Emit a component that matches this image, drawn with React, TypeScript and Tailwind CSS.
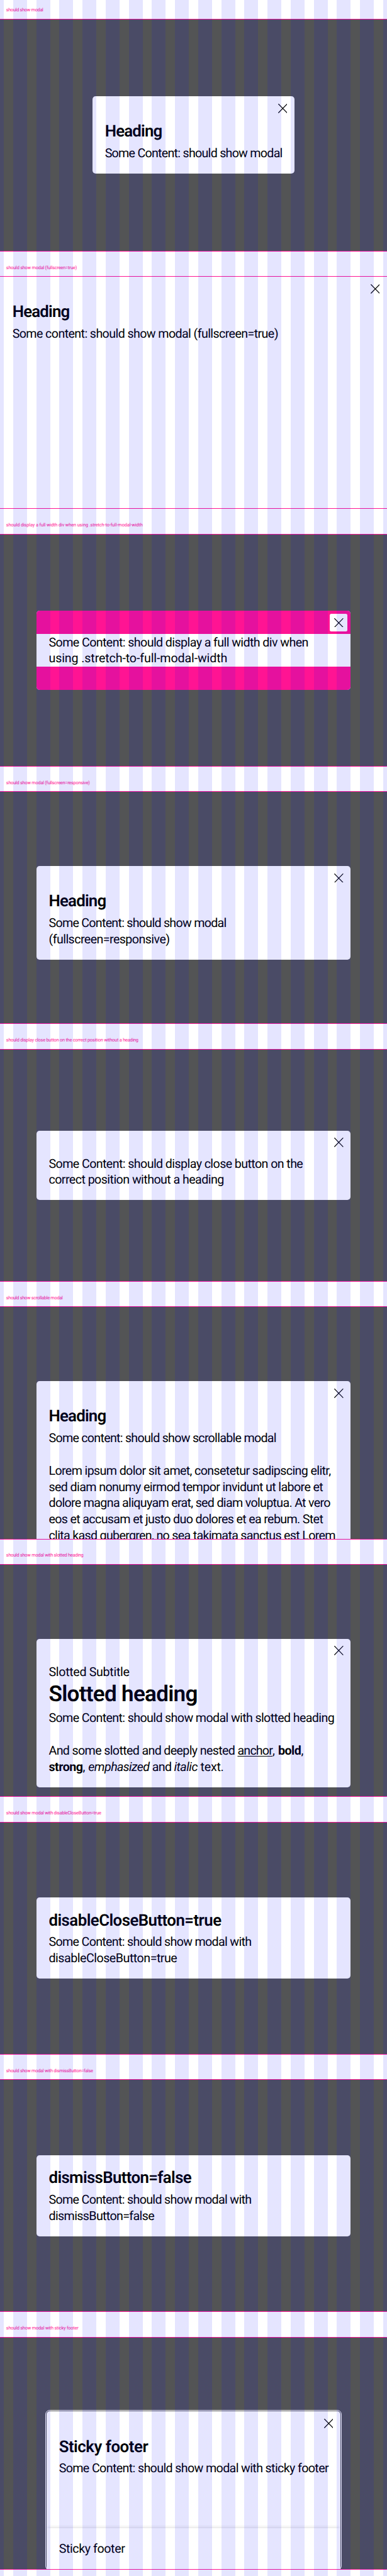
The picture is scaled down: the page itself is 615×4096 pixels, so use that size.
import type { ReactNode } from "react";
import clsx from "clsx";

function CloseButton() {
  return (
    <button
      type="button"
      aria-label="Close"
      className="absolute top-[4.92px] right-[4.92px] z-10 flex size-[28.29px] items-center justify-center rounded-[2.5px] bg-white"
    >
      <svg viewBox="0 0 24 24" className="size-[14.76px]" fill="none" stroke="#010205" strokeWidth="1.9">
        <path d="M0.6 0.3 23.4 23.7M23.4 0.3 0.6 23.7" />
      </svg>
    </button>
  );
}

function Line({ children, className }: { children?: ReactNode; className?: string }) {
  return <span className={clsx("block h-[25.83px] whitespace-pre", className)}>{children}</span>;
}

function Body({ children }: { children: ReactNode }) {
  return <div className="-mb-[0.6px] pt-[0.6px] text-[19.68px] leading-[25.83px]">{children}</div>;
}

function Heading({ children, className }: { children: ReactNode; className: string }) {
  return (
    <h2
      className={clsx(
        "mb-[4.12px] pt-[0.8px] text-[25.83px] leading-[33.21px] font-semibold whitespace-nowrap",
        className,
      )}
    >
      {children}
    </h2>
  );
}

function Modal({
  children,
  className = "w-[499.38px]",
  closable = true,
}: {
  children: ReactNode;
  className?: string;
  closable?: boolean;
}) {
  return (
    <div
      className={clsx(
        "relative shrink-0 rounded-[4.92px] bg-white px-[19.68px] pb-[19.68px]",
        closable ? "pt-[39.36px]" : "pt-[19.68px]",
        className,
      )}
    >
      {closable && <CloseButton />}
      {children}
    </div>
  );
}

function Case({
  title,
  tracking,
  first,
  align = "center",
  children,
}: {
  title: string;
  tracking: string;
  first?: boolean;
  align?: "center" | "top" | "fill";
  children: ReactNode;
}) {
  return (
    <section>
      <header
        className={clsx(
          "flex flex-col justify-end pb-[8.6px] pl-[9.84px] text-[7.38px] leading-[11px] text-[#ff1493]",
          first ? "h-[29.52px]" : "h-[39.36px]",
        )}
      >
        <p className={clsx("whitespace-nowrap", tracking)}>{title}</p>
      </header>
      <div
        className={clsx(
          "flex h-[370.23px] justify-center overflow-hidden border-y border-[#ff1493]",
          align === "center" && "items-center bg-[#535455]",
          align === "top" && "items-start bg-[#535455] pt-[117.7px]",
          align === "fill" && "items-stretch bg-white",
        )}
      >
        {children}
      </div>
    </section>
  );
}

export default function App() {
  return (
    <main className="relative h-[4096px] w-[615px] overflow-hidden bg-white font-['Roboto',sans-serif] text-[#010205] [text-rendering:geometricPrecision]">
      <Case first title="should show modal" tracking="tracking-[-0.042em]">
        <Modal className="w-[321.03px]">
          <Heading className="tracking-[-0.031em]">Heading</Heading>
          <Body>
            <Line className="tracking-[-0.0375em]">Some Content: should show modal</Line>
          </Body>
        </Modal>
      </Case>

      <Case title="should show modal (fullscreen=true)" tracking="tracking-[-0.0305em]" align="fill">
        <Modal className="w-full rounded-none">
          <Heading className="tracking-[-0.031em]">Heading</Heading>
          <Body>
            <Line className="tracking-[-0.0308em]">Some content: should show modal (fullscreen=true)</Line>
          </Body>
        </Modal>
      </Case>

      <Case
        title="should display a full width div when using .stretch-to-full-modal-width"
        tracking="tracking-[-0.0165em]"
      >
        <div className="relative w-[499.38px] overflow-hidden rounded-[4.92px] bg-white">
          <CloseButton />
          <div className="h-[36.9px] bg-[#ff1493]" />
          <div className="px-[19.68px]">
            <Body>
              <Line className="tracking-[-0.0305em]">Some Content: should display a full width div when</Line>
              <Line className="tracking-[-0.0068em]">using .stretch-to-full-modal-width</Line>
            </Body>
          </div>
          <div className="h-[36.9px] bg-[#ff1493]" />
        </div>
      </Case>

      <Case title="should show modal (fullscreen=responsive)" tracking="tracking-[-0.033em]" align="top">
        <Modal>
          <Heading className="tracking-[-0.031em]">Heading</Heading>
          <Body>
            <Line className="tracking-[-0.0375em]">Some Content: should show modal</Line>
            <Line className="tracking-[-0.0292em]">(fullscreen=responsive)</Line>
          </Body>
        </Modal>
      </Case>

      <Case
        title="should display close button on the correct position without a heading"
        tracking="tracking-[-0.0302em]"
      >
        <Modal>
          <Body>
            <Line className="tracking-[-0.0305em]">Some Content: should display close button on the</Line>
            <Line className="tracking-[-0.029em]">correct position without a heading</Line>
          </Body>
        </Modal>
      </Case>

      <Case title="should show scrollable modal" tracking="tracking-[-0.038em]" align="top">
        <Modal>
          <Heading className="tracking-[-0.031em]">Heading</Heading>
          <Body>
            <Line className="tracking-[-0.037em]">Some content: should show scrollable modal</Line>
            <Line />
            <Line className="tracking-[-0.0325em]">Lorem ipsum dolor sit amet, consetetur sadipscing elitr,</Line>
            <Line className="tracking-[-0.0317em]">sed diam nonumy eirmod tempor invidunt ut labore et</Line>
            <Line className="tracking-[-0.035em]">dolore magna aliquyam erat, sed diam voluptua. At vero</Line>
            <Line className="tracking-[-0.0334em]">eos et accusam et justo duo dolores et ea rebum. Stet</Line>
            <Line className="tracking-[-0.0351em]">clita kasd gubergren, no sea takimata sanctus est Lorem</Line>
          </Body>
        </Modal>
      </Case>

      <Case title="should show modal with slotted heading" tracking="tracking-[-0.034em]" align="top">
        <Modal>
          <Body>
            <Line className="tracking-[-0.017em]">Slotted Subtitle</Line>
          </Body>
          <h2 className="mb-[3.9px] pt-[1px] text-[35.06px] leading-[43.05px] font-semibold tracking-[-0.02em] whitespace-nowrap">
            Slotted heading
          </h2>
          <Body>
            <Line className="tracking-[-0.0323em]">Some Content: should show modal with slotted heading</Line>
            <Line />
            <Line>
              <span className="tracking-[-0.0332em]">And some slotted and deeply nested </span>
              <a className="tracking-[-0.0419em] underline decoration-[1.23px] underline-offset-[2.4px]">anchor</a>
              {", "}
              <b className="font-bold tracking-[-0.0238em]">bold</b>,
            </Line>
            <Line>
              <strong className="font-bold tracking-[-0.0249em]">strong</strong>
              {", "}
              <em className="tracking-[-0.0305em] italic">emphasized</em>
              <span className="tracking-[-0.035em]"> and </span>
              <i className="tracking-[-0.0257em] italic">italic</i>
              <span className="tracking-[-0.0139em]"> text.</span>
            </Line>
          </Body>
        </Modal>
      </Case>

      <Case title="should show modal with disableCloseButton=true" tracking="tracking-[-0.0335em]">
        <Modal closable={false}>
          <Heading className="tracking-[-0.0215em]">disableCloseButton=true</Heading>
          <Body>
            <Line className="tracking-[-0.0348em]">Some Content: should show modal with</Line>
            <Line className="tracking-[-0.0257em]">disableCloseButton=true</Line>
          </Body>
        </Modal>
      </Case>

      <Case title="should show modal with dismissButton=false" tracking="tracking-[-0.0355em]">
        <Modal closable={false}>
          <Heading className="tracking-[-0.0248em]">dismissButton=false</Heading>
          <Body>
            <Line className="tracking-[-0.0348em]">Some Content: should show modal with</Line>
            <Line className="tracking-[-0.0332em]">dismissButton=false</Line>
          </Body>
        </Modal>
      </Case>

      <Case title="should show modal with sticky footer" tracking="tracking-[-0.0285em]" align="top">
        <div className="relative w-[467.1px] shrink-0 rounded-[5px] bg-white outline outline-offset-1 outline-white">
          <CloseButton />
          <div className="h-[185.7px] px-[19.68px] pt-[39.36px]">
            <Heading className="tracking-[-0.0185em]">Sticky footer</Heading>
            <Body>
              <Line className="tracking-[-0.0323em]">Some Content: should show modal with sticky footer</Line>
            </Body>
          </div>
          <footer className="bg-white px-[19.68px] py-[19.68px] shadow-[0_-3px_5px_-2px_rgba(0,0,0,0.14)]">
            <Body>
              <Line className="tracking-[-0.021em]">Sticky footer</Line>
            </Body>
          </footer>
        </div>
      </Case>

      <div className="pointer-events-none absolute inset-0 z-20 flex justify-center gap-[14.76px] overflow-hidden">
        {Array.from({ length: 18 }, (_, i) => (
          <div key={i} className="w-[21.986px] shrink-0 bg-[#0000ff]/10" />
        ))}
      </div>
    </main>
  );
}
